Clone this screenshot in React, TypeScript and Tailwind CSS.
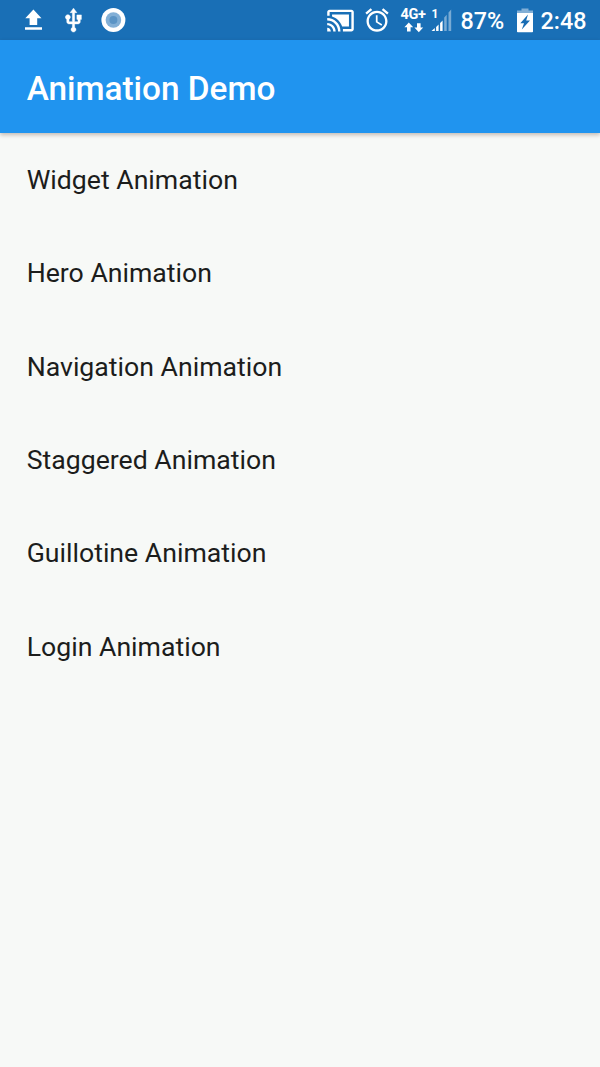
const items = [
  'Widget Animation',
  'Hero Animation',
  'Navigation Animation',
  'Staggered Animation',
  'Guillotine Animation',
  'Login Animation',
];

function UploadIcon() {
  return (
    <svg className="ml-[24px] h-10 w-[19px]" viewBox="24 0 19 40" fill="#fff">
      <path d="M33.4 9.5L41.5 18.3H37.2V25H29.6V18.3H25.3ZM25 27.2H42V29.7H25Z" />
    </svg>
  );
}

function UsbIcon() {
  return (
    <svg className="ml-[17px] h-[27px] w-[27px]" viewBox="0 0 24 24" fill="#fff" stroke="#fff" strokeWidth="0.4">
      <path d="M15 7v4h1v2h-3V5h2l-3-4-3 4h2v8H8v-2.07c.7-.37 1.2-1.08 1.2-1.93 0-1.21-.99-2.2-2.2-2.2-1.21 0-2.2.99-2.2 2.2 0 .85.5 1.56 1.2 1.93V13c0 1.11.89 2 2 2h3v3.05c-.71.37-1.2 1.1-1.2 1.95 0 1.22.99 2.2 2.2 2.2 1.21 0 2.2-.98 2.2-2.2 0-.85-.49-1.58-1.2-1.95V15h3c1.11 0 2-.89 2-2v-2h1V7h-4z" />
    </svg>
  );
}

function RecordIcon() {
  return (
    <svg className="ml-[14px] h-10 w-[25px]" viewBox="101 0 25 40">
      <circle cx="113.4" cy="20" r="12" fill="#fff" />
      <circle cx="113.4" cy="20" r="7.8" fill="#82afd6" />
      <circle cx="113.4" cy="20" r="4" fill="#5b94c5" />
    </svg>
  );
}

function CastIcon() {
  return (
    <svg className="h-[29px] w-[29px]" viewBox="0 0 24 24" fill="#fff">
      <path d="M1 18v3h3c0-1.66-1.34-3-3-3zm0-4v2c2.76 0 5 2.24 5 5h2c0-3.87-3.13-7-7-7zm18-7H5v1.63c3.96 1.28 7.09 4.41 8.37 8.37H19V7zM1 10v2c4.97 0 9 4.03 9 9h2c0-6.08-4.93-11-11-11zm20-7H3c-1.1 0-2 .9-2 2v3h2V5h18v14h-7v2h7c1.1 0 2-.9 2-2V5c0-1.1-.9-2-2-2z" />
    </svg>
  );
}

function AlarmIcon() {
  return (
    <svg className="ml-[8px] h-[28px] w-[28px]" viewBox="0 0 24 24" fill="#fff">
      <path d="M22 5.72l-4.6-3.86-1.29 1.53 4.6 3.86L22 5.72zM7.88 3.39L6.6 1.86 2 5.71l1.29 1.53 4.59-3.85zM12.5 8H11v6l4.75 2.85.75-1.23-4-2.37V8zM12 4c-4.97 0-9 4.03-9 9s4.02 9 9 9c4.97 0 9-4.03 9-9s-4.03-9-9-9zm0 16c-3.87 0-7-3.13-7-7s3.13-7 7-7 7 3.13 7 7-3.13 7-7 7z" />
    </svg>
  );
}

function Network() {
  return (
    <div className="ml-[10px] flex h-10 w-[27px] flex-col items-start pt-[9px]">
      <span className="text-[14.5px] leading-[12px] font-bold tracking-[-0.3px] whitespace-nowrap">4G+</span>
      <svg className="ml-[2px] mt-px h-[11px] w-[21px]" viewBox="402 22 21 11" fill="#fff">
        <path d="M407.8 22.6L412.2 27.2H409.6V31.5H406V27.2H403.4ZM417.8 32.2L413.4 27.6H416V23.2H419.6V27.6H422.2Z" />
      </svg>
    </div>
  );
}

function SignalIcon() {
  return (
    <div className="ml-[3px] grid h-10 w-[22px]">
      <span className="col-start-1 row-start-1 pl-[1px] pt-[8px] text-[12px] leading-[12px] font-bold">1</span>
      <svg className="col-start-1 row-start-1 h-10 w-[22px]" viewBox="431 0 22 40" fill="#fff">
        <path d="M431.5 31L434.8 28V31ZM436.1 27L438.6 24.4V31H436.1ZM440.1 23L442.6 20.4V31H440.1Z" />
        <path d="M444.2 17.5L446.7 14.8V31H444.2ZM448.5 12.5L451.2 9.5V31H448.5Z" fillOpacity="0.42" />
      </svg>
    </div>
  );
}

function BatteryIcon() {
  return (
    <svg className="ml-[11px] h-10 w-[18px]" viewBox="515 0 18 40">
      <path d="M520.5 8.5H527.5V10.5H532V13.5H516V10.5H520.5Z" fill="#82afd6" />
      <path d="M516 13H532V31.5Q532 32.2 531.2 32.2H516.8Q516 32.2 516 31.5Z" fill="#fff" />
      <path d="M527 14.5L519.3 23.2H523L520.8 29.5L529 20.6H525.2Z" fill="#176cb3" />
    </svg>
  );
}

export default function App() {
  return (
    <div className="h-[1067px] w-[600px] overflow-hidden bg-[#f7f9f7] font-['Roboto',sans-serif]">
      <div className="flex h-10 items-center bg-[#196fb6] text-white">
        <UploadIcon />
        <UsbIcon />
        <RecordIcon />
        <div className="ml-auto flex h-10 items-center pr-[13.5px]">
          <CastIcon />
          <AlarmIcon />
          <Network />
          <SignalIcon />
          <span className="ml-[8px] w-[44px] pt-[3px] text-[23.33px] leading-none font-medium">87%</span>
          <BatteryIcon />
          <span className="ml-[7px] w-[46px] pt-[3px] text-[23.33px] leading-none font-medium">2:48</span>
        </div>
      </div>
      <header className="flex h-[93.33px] items-center bg-[#2094ef] pl-[26.67px] pt-[3px] shadow-[0_2px_4px_rgba(60,30,10,0.28)]">
        <h1 className="text-[33.33px] leading-none font-medium text-white">Animation Demo</h1>
      </header>
      <ul>
        {items.map((item) => (
          <li key={item} className="flex h-[93.33px] items-center pl-[26.67px] pt-[1px] text-[26.67px] leading-none text-[#1c1d1c]">
            {item}
          </li>
        ))}
      </ul>
    </div>
  );
}
